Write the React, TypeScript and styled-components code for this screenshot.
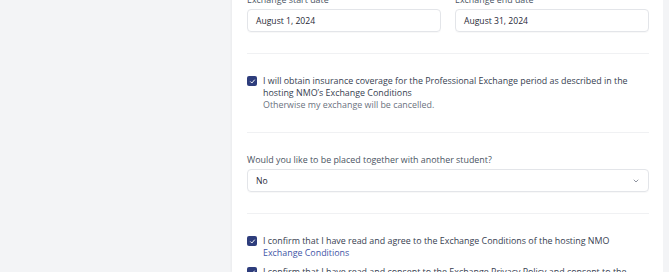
import styled, { createGlobalStyle } from "styled-components";

const GlobalStyle = createGlobalStyle`
    html, body {
        margin: 0;
        padding: 0;
        height: 272px;
        overflow: hidden;
        background: #f3f4f6;
        font-family: "Open Sans", "Noto Sans", sans-serif;
    }
`;

const Layout = styled.div`
    display: flex;
    height: 272px;
    overflow: hidden;
`;

const Sidebar = styled.aside`
    width: 232px;
    flex-shrink: 0;
    background: #f3f4f6;
`;

const Panel = styled.main`
    width: 431px;
    flex-shrink: 0;
    background: #ffffff;
    box-shadow: -1px 0 2px rgba(0, 0, 0, 0.04);
    padding: 0 14px 0 15px;
    box-sizing: border-box;
    margin-top: -6px;
`;

const Section = styled.section<{ $first?: boolean }>`
    padding: ${p => (p.$first ? "0 0 21px" : "21px 0")};
    border-top: ${p => (p.$first ? "none" : "1px solid #f0f1f3")};
`;

const DateGrid = styled.div`
    display: grid;
    grid-template-columns: 1fr 1fr;
    column-gap: 14px;
`;

const Field = styled.div`
    display: flex;
    flex-direction: column;
    gap: 4px;
`;

const Label = styled.label`
    font-size: 8.9px;
    line-height: 11px;
    color: #4b5563;
`;

const Required = styled.span`
    color: #ef4444;
`;

const Input = styled.div`
    height: 23px;
    box-sizing: border-box;
    border: 1px solid #e3e5e9;
    border-radius: 4px;
    box-shadow: 0 1px 1px rgba(0, 0, 0, 0.03);
    padding: 0 8px;
    display: flex;
    align-items: center;
    justify-content: space-between;
    font-size: 8.6px;
    color: #1f2937;
`;

const CheckRow = styled.div`
    display: flex;
    gap: 6px;
    align-items: flex-start;
    & + & {
        margin-top: 7px;
    }
`;

const Box = styled.span`
    width: 10px;
    height: 10px;
    margin-top: 1px;
    flex-shrink: 0;
    border-radius: 2px;
    background: #2e3d7c;
    display: flex;
    align-items: center;
    justify-content: center;
`;

const CheckText = styled.div`
    font-size: 8.9px;
    line-height: 12px;
    color: #374151;
`;

const Muted = styled.div`
    color: #6b7280;
`;

const Link = styled.a`
    display: block;
    color: #3f55a6;
    text-decoration: none;
`;

function Check() {
    return (
        <Box>
            <svg width="7" height="7" viewBox="0 0 16 16" fill="none">
                <path d="M3.5 8.5l3 3 6-7" stroke="#fff" strokeWidth="2.2" strokeLinecap="round" strokeLinejoin="round" />
            </svg>
        </Box>
    );
}

function Chevron() {
    return (
        <svg width="8" height="8" viewBox="0 0 16 16" fill="none">
            <path d="M4 6l4 4 4-4" stroke="#6b7280" strokeWidth="1.5" strokeLinecap="round" strokeLinejoin="round" />
        </svg>
    );
}

export default function App() {
    return (
        <>
            <GlobalStyle />
            <Layout>
                <Sidebar />
                <Panel>
                    <Section $first>
                        <DateGrid>
                            <Field>
                                <Label>
                                    Exchange start date <Required>*</Required>
                                </Label>
                                <Input>August 1, 2024</Input>
                            </Field>
                            <Field>
                                <Label>
                                    Exchange end date <Required>*</Required>
                                </Label>
                                <Input>August 31, 2024</Input>
                            </Field>
                        </DateGrid>
                    </Section>
                    <Section>
                        <CheckRow>
                            <Check />
                            <CheckText>
                                I will obtain insurance coverage for the Professional Exchange period as described in the hosting NMO’s Exchange Conditions
                                <Muted>Otherwise my exchange will be cancelled.</Muted>
                            </CheckText>
                        </CheckRow>
                    </Section>
                    <Section>
                        <Field>
                            <Label>Would you like to be placed together with another student?</Label>
                            <Input>
                                No
                                <Chevron />
                            </Input>
                        </Field>
                    </Section>
                    <Section>
                        <CheckRow>
                            <Check />
                            <CheckText>
                                I confirm that I have read and agree to the Exchange Conditions of the hosting NMO
                                <Link href="#">Exchange Conditions</Link>
                            </CheckText>
                        </CheckRow>
                        <CheckRow>
                            <Check />
                            <CheckText>
                                I confirm that I have read and consent to the Exchange Privacy Policy and consent to the processing of my personal data
                            </CheckText>
                        </CheckRow>
                    </Section>
                </Panel>
            </Layout>
        </>
    );
}
